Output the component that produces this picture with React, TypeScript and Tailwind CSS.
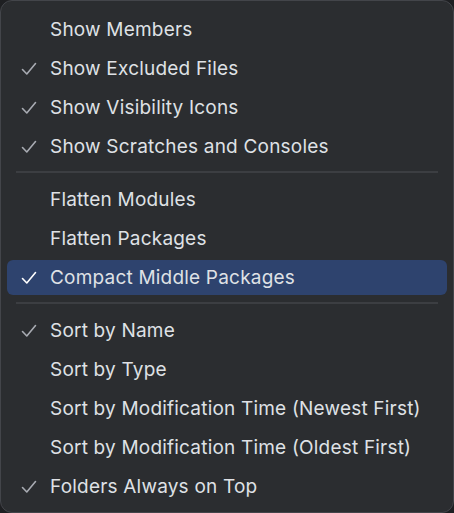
import React from "react";

type Item = { label: string; checked?: boolean; selected?: boolean } | "sep";

const items: Item[] = [
  { label: "Show Members" },
  { label: "Show Excluded Files", checked: true },
  { label: "Show Visibility Icons", checked: true },
  { label: "Show Scratches and Consoles", checked: true },
  "sep",
  { label: "Flatten Modules" },
  { label: "Flatten Packages" },
  { label: "Compact Middle Packages", checked: true, selected: true },
  "sep",
  { label: "Sort by Name", checked: true },
  { label: "Sort by Type" },
  { label: "Sort by Modification Time (Newest First)" },
  { label: "Sort by Modification Time (Oldest First)" },
  { label: "Folders Always on Top", checked: true },
];

function Check({ white }: { white?: boolean }) {
  return (
    <svg width="16" height="16" viewBox="0 0 16 16" fill="none">
      <path
        d="M1.5 8.5 L5.8 13 L14.5 2.5"
        stroke={white ? "#ffffff" : "#a8abb2"}
        strokeWidth="1.6"
        strokeLinecap="round"
        strokeLinejoin="round"
      />
    </svg>
  );
}

export default function App() {
  return (
    <div className="w-[454px] h-[513px] bg-[#1e1f22]">
      <div
        className="w-full h-full bg-[#2b2d30] border border-[#43454a] rounded-[12px] pt-[9px] pb-[6px] flex flex-col"
        style={{ fontFamily: "Inter, 'Noto Sans', sans-serif" }}
      >
        {items.map((it, i) =>
          it === "sep" ? (
            <div key={i} className="h-[14px] pt-[5px] px-[15px]">
              <div className="h-[2px] bg-[#3c3e42]" />
            </div>
          ) : (
            <div key={i} className="h-[39px] px-[6px] flex items-center">
              <div
                className={
                  "h-[35px] w-full rounded-[6px] flex items-center " +
                  (it.selected ? "bg-[#2e436e]" : "")
                }
              >
                <div className="w-[43px] flex justify-center pl-[1px]">
                  {it.checked ? <Check white={it.selected} /> : null}
                </div>
                <span className="text-[19px] text-[#dfe1e5] tracking-[0.2px] pt-[2px]">{it.label}</span>
              </div>
            </div>
          )
        )}
      </div>
    </div>
  );
}
